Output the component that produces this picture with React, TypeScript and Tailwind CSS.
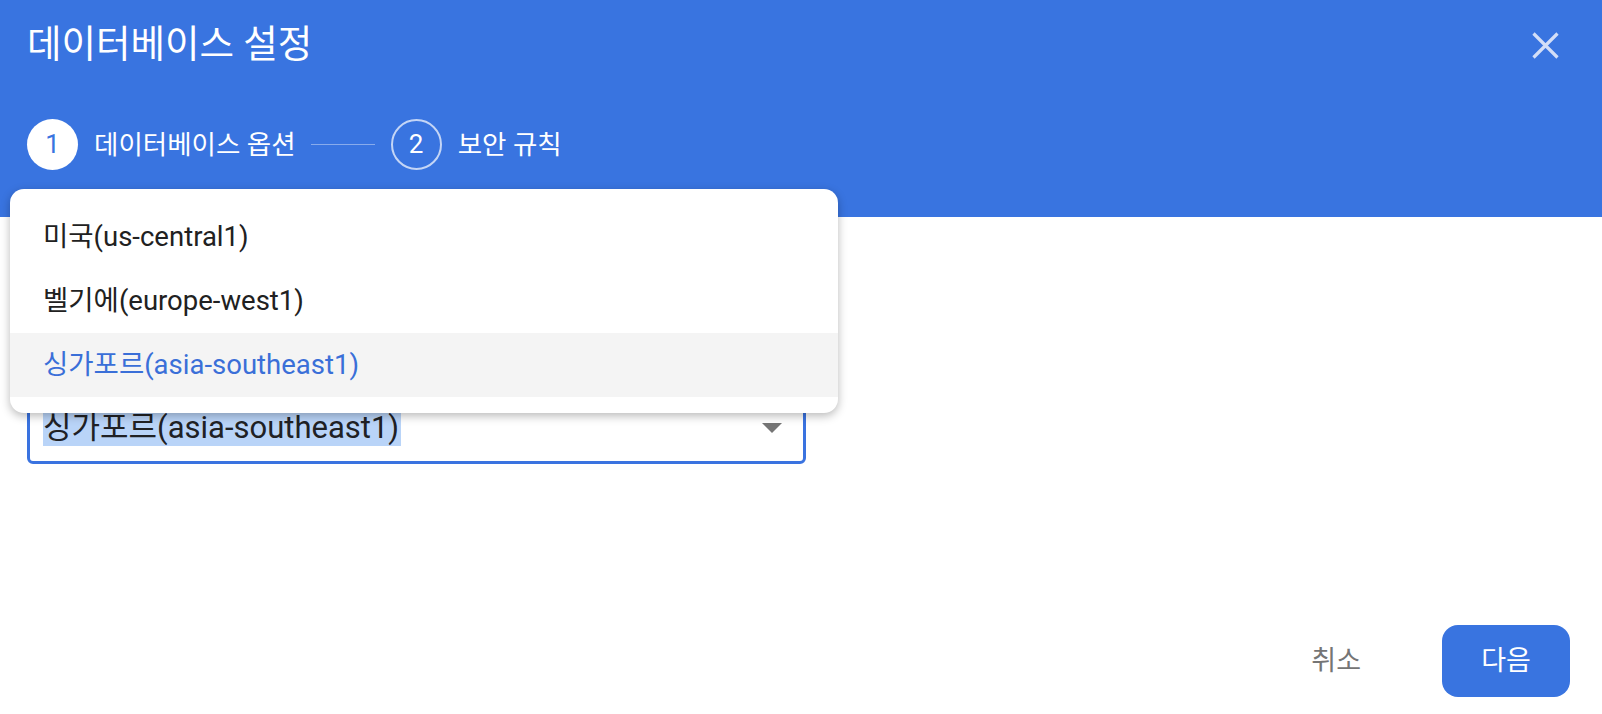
const regions = [
  { id: 'us', label: '미국(us-central1)' },
  { id: 'eu', label: '벨기에(europe-west1)' },
  { id: 'asia', label: '싱가포르(asia-southeast1)' },
];

const font = { fontFamily: 'Roboto, "Noto Sans CJK KR", sans-serif' };

export default function App() {
  const selected = 'asia';

  return (
    <div className="relative flex h-[714px] w-full flex-col overflow-hidden bg-white" style={font}>
      {/* header */}
      <div className="flex h-[217px] shrink-0 flex-col bg-[#3974e0] pl-[27px] pr-[43px]">
        <div className="flex h-[90px] items-center justify-between">
          <h1 className="text-[37.5px] font-normal leading-none text-white">데이터베이스 설정</h1>
          <button className="flex h-[27px] w-[27px] items-center justify-center">
            <svg width="27" height="27" viewBox="0 0 27 27" fill="none">
              <path d="M1.5 1.5 L25.5 25.5 M25.5 1.5 L1.5 25.5" stroke="#d3def7" strokeWidth="3.2" />
            </svg>
          </button>
        </div>
        <div className="mt-[29px] flex h-[51px] items-center">
          <div className="flex h-[51px] w-[51px] items-center justify-center rounded-full bg-white text-[26px] text-[#3974e0]">
            1
          </div>
          <span className="ml-[16px] text-[26.5px] text-white">데이터베이스 옵션</span>
          <div className="ml-[15px] h-px w-[64px] bg-white/40" />
          <div className="ml-[16px] flex h-[51px] w-[51px] items-center justify-center rounded-full border-2 border-white/70 text-[26px] text-white">
            2
          </div>
          <span className="ml-[16px] text-[26.5px] text-white">보안 규칙</span>
        </div>
      </div>

      {/* body */}
      <div className="flex flex-1 flex-col px-[27px]">
        <div className="mt-[175px] flex h-[72px] w-[779px] items-center justify-between rounded-[6px] border-[3px] border-[#3a73e0] pl-[13px] pr-[21px]">
          <span className="bg-[#b9d4f8] pr-[2px] text-[31px] leading-[36px] text-[#202124]">싱가포르(asia-southeast1)</span>
          <svg width="20" height="10" viewBox="0 0 20 10">
            <path d="M0 0 L20 0 L10 10 Z" fill="#757575" />
          </svg>
        </div>
        <div className="mt-auto mb-[17px] flex items-center justify-end gap-[57px] pr-[5px]">
          <button className="h-[72px] px-[24px] text-[27px] text-[#757575]">취소</button>
          <button className="h-[72px] w-[128px] rounded-[16px] bg-[#3974e0] text-[27px] text-white">다음</button>
        </div>
      </div>

      {/* open select menu */}
      <div className="absolute left-[10px] top-[189px] w-[828px] rounded-[14px] bg-white py-[16px] shadow-[0_3px_10px_rgba(0,0,0,0.28)]">
        {regions.map((r) => (
          <div
            key={r.id}
            className={
              r.id === selected
                ? 'flex h-[64px] items-center bg-[#f4f4f4] pl-[33px] text-[27.5px] text-[#3a6fd8]'
                : 'flex h-[64px] items-center pl-[33px] text-[27.5px] text-[#212121]'
            }
          >
            {r.label}
          </div>
        ))}
      </div>
    </div>
  );
}
